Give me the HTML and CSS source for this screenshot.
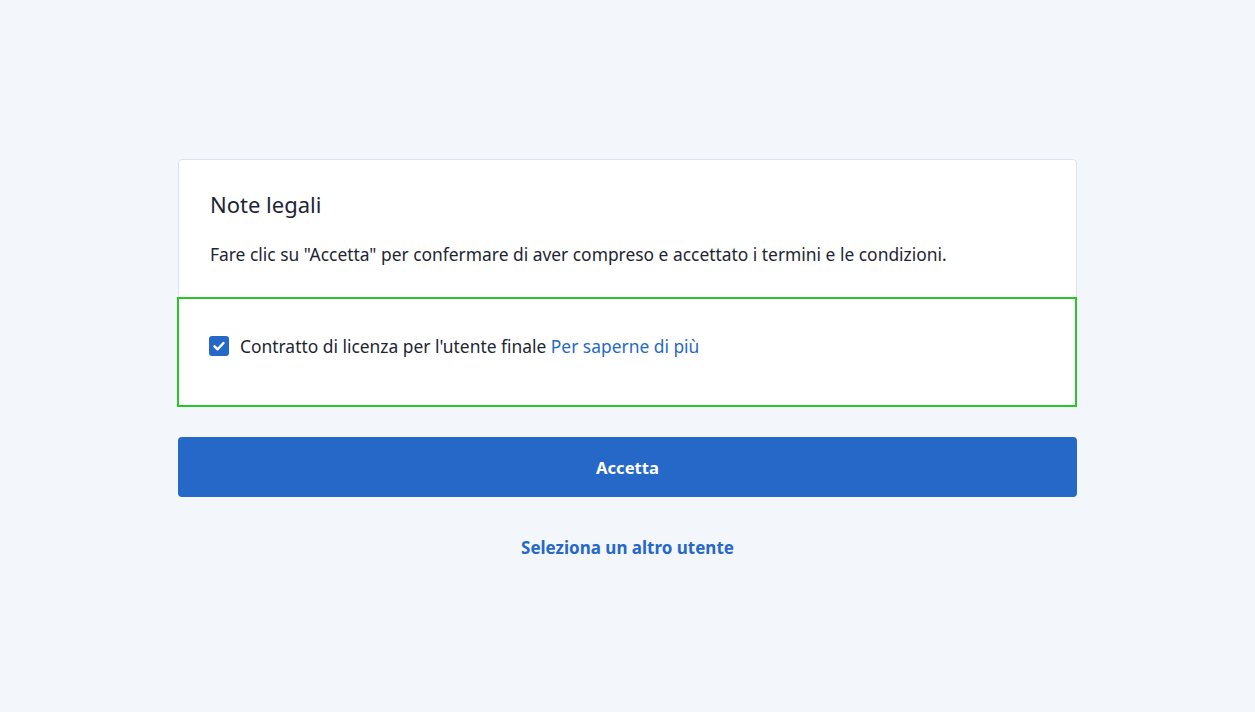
FILE: index.html
```html
<!DOCTYPE html>
<html lang="it">
<head>
<meta charset="utf-8">
<title>Note legali</title>
<link rel="stylesheet" href="styles.css">
</head>
<body>
<main class="page">
  <div class="wrap">
    <section class="card">
      <div class="card-head">
        <h1 class="title">Note legali</h1>
        <p class="desc">Fare clic su "Accetta" per confermare di aver compreso e accettato i termini e le condizioni.</p>
      </div>
      <div class="card-body">
        <label class="check-row">
          <span class="checkbox">
            <svg viewBox="0 0 20 20" width="20" height="20"><path d="M5.5 10.3l3 3 6-6.3" fill="none" stroke="#fff" stroke-width="2.4" stroke-linecap="round" stroke-linejoin="round"/></svg>
          </span>
          <span class="check-text">Contratto di licenza per l'utente finale <a class="link" href="#">Per saperne di più</a></span>
        </label>
      </div>
    </section>
    <button class="btn">Accetta</button>
    <a class="alt" href="#">Seleziona un altro utente</a>
  </div>
</main>
</body>
</html>
```
FILE: styles.css
```css
* { box-sizing: border-box; }
html, body { margin: 0; height: 100%; }
body {
  background: #f3f6fb;
  font-family: "Noto Sans", "Open Sans", sans-serif;
  color: #1f2937;
}
.page {
  display: flex;
  justify-content: center;
  padding-top: 159px;
}
.wrap {
  width: 899px;
  display: flex;
  flex-direction: column;
  align-items: stretch;
}
.card {
  background: #fff;
  border: 1px solid #dde3ee;
  border-radius: 4px;
}
.card-head {
  padding: 28px 31px 30px;
}
.title {
  margin: 0;
  font-size: 22px;
  font-weight: 400;
  line-height: 32px;
  color: #1c2533;
}
.desc {
  margin: 21px 0 0;
  font-size: 17.4px;
  line-height: 26px;
  color: #1c2533;
}
.card-body {
  margin: 0 -1px -1px -2px;
  height: 110px;
  border: 2px solid #27c72a;
  display: flex;
  align-items: center;
  padding: 0 29px 12px 30px;
}
.check-row {
  display: flex;
  align-items: center;
  gap: 11px;
  font-size: 17.4px;
  color: #1c2533;
}
.checkbox {
  width: 20px;
  height: 20px;
  border-radius: 3px;
  background: #2668c7;
  display: flex;
}
.link {
  color: #2668c7;
  text-decoration: none;
}
.btn {
  margin-top: 30px;
  height: 60px;
  border: 0;
  border-radius: 4px;
  background: #2668c7;
  color: #fff;
  font-family: inherit;
  font-size: 16.6px;
  font-weight: 700;
}
.alt {
  margin-top: 39px;
  align-self: center;
  font-size: 17px;
  font-weight: 700;
  color: #2668c7;
  text-decoration: none;
  line-height: 24px;
}
```
